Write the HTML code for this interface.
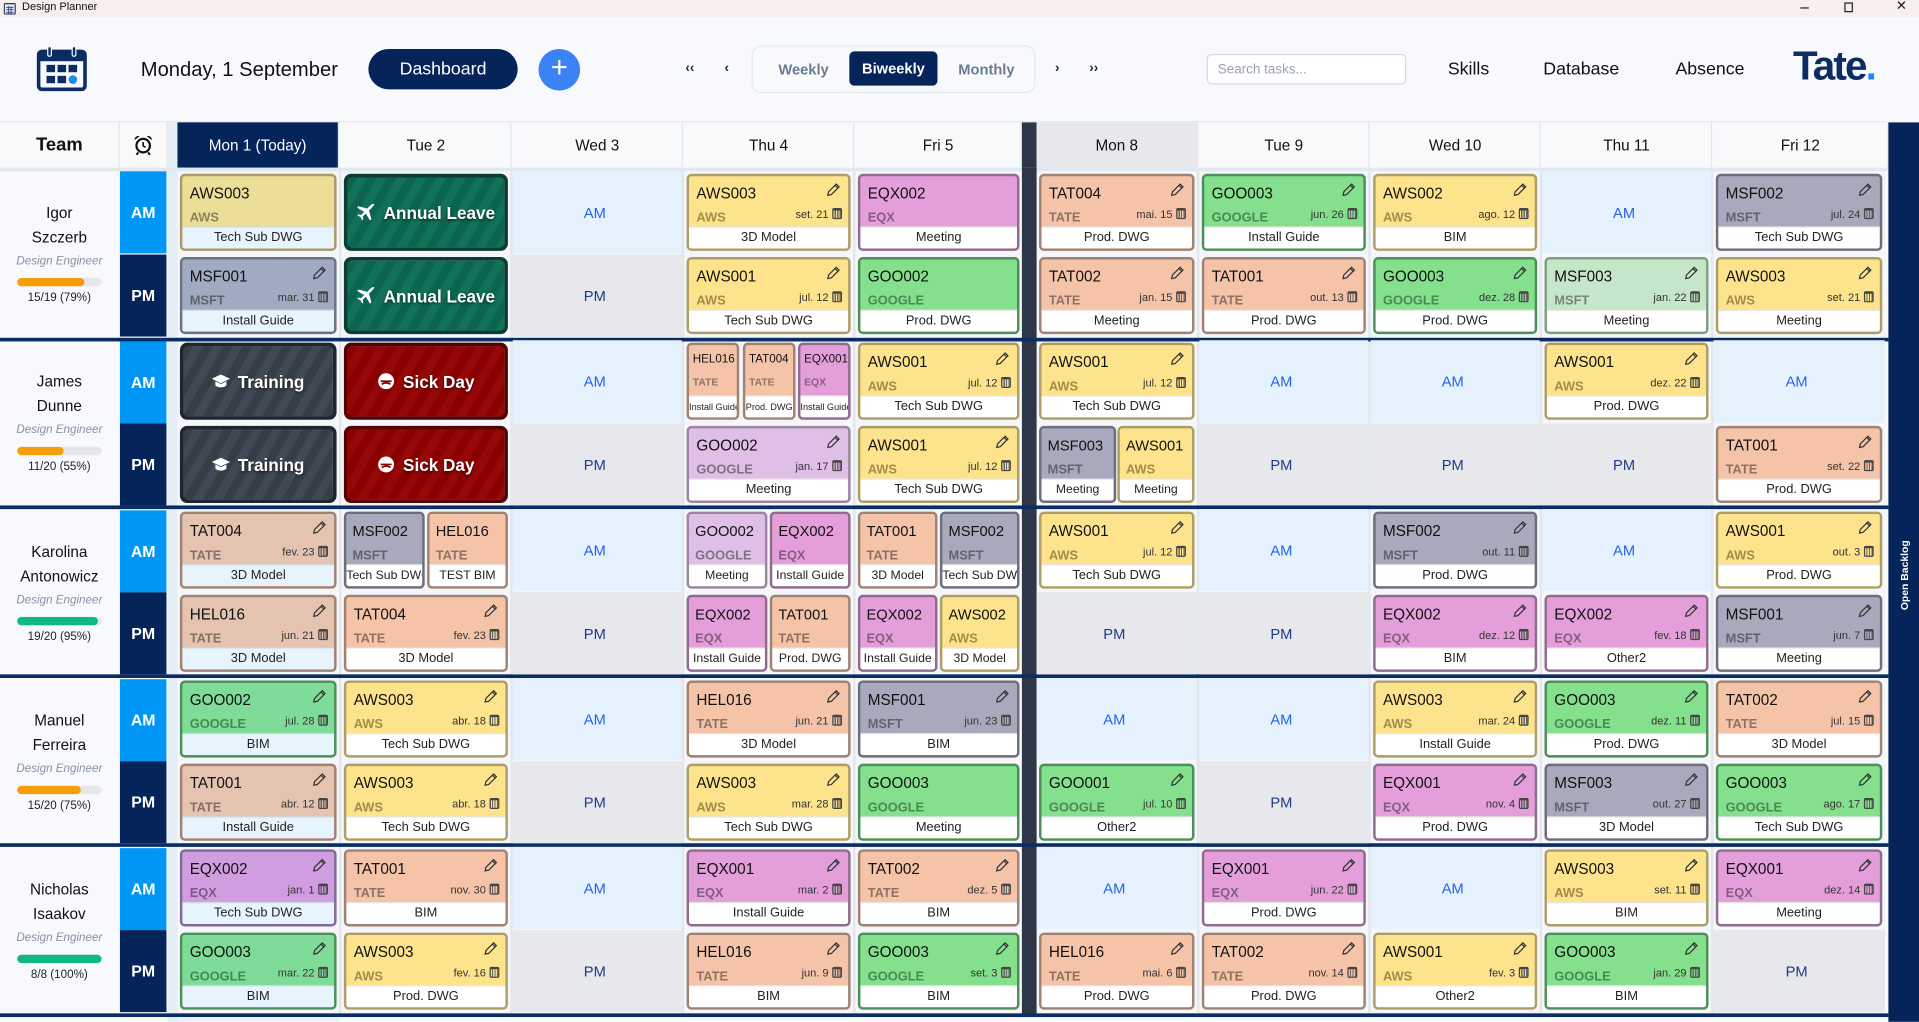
<!DOCTYPE html>
<html><head><meta charset="utf-8">
<style>
html,body{margin:0;padding:0;width:1919px;height:1022px;overflow:hidden;background:#f7f9fc}
#w{position:absolute;left:0;top:0;width:1568px;height:835px;transform:scale(1.22385);transform-origin:0 0;background:#f7f9fc;overflow:hidden;font-family:"Liberation Sans",sans-serif;color:#1f2937}
.ab{position:absolute}
.tb{left:0;top:0;width:1568px;height:14px;background:#f8eeec}
.hc{position:absolute;top:100px;height:37px;background:#f8f9fb;border-right:1px solid #e3e7ec;box-sizing:border-box;font-size:12.5px;display:flex;align-items:center;justify-content:center;color:#111}
.col{position:absolute;top:140px;height:691px;background:#f4f6f9}
.k{position:absolute;height:63px;border:2px solid #a89a6a;border-radius:4px;box-sizing:border-box;overflow:hidden}
.k b{position:absolute;left:6px;top:7px;font-size:12.5px;font-weight:normal;color:#111;white-space:nowrap}
.k s{position:absolute;left:6px;top:28px;font-size:10.5px;font-weight:bold;color:rgba(0,0,0,.42);text-decoration:none;white-space:nowrap}
.k u{position:absolute;right:5px;top:26px;font-size:9px;text-decoration:none;color:#333;white-space:nowrap}
.k p{position:absolute;left:0;right:0;bottom:0;height:17px;margin:0;background:#fff;font-size:10.5px;text-align:center;line-height:17px;color:#222;border-top:1px solid rgba(0,0,0,.1);white-space:nowrap;overflow:hidden}
.k .pn{position:absolute;right:6px;top:5px;width:12px;height:12px}
.cl{display:inline-block;width:6px;height:6px;border:1.3px solid #444;border-top-width:2.5px;border-radius:1.5px;vertical-align:-1px;margin-left:3px;background:repeating-linear-gradient(90deg,transparent 0 1px,#666 1px 2px)}
.m b{font-size:9.5px;left:3px;top:6px}.m s{font-size:8.5px;left:3px;top:25px}.m p{font-size:7.5px}
.h b{font-size:12px;left:5px}.h s{left:5px}.h p{font-size:10px}
.Y{background:#fde38c;border-color:#ad9d69}.Y s{color:rgba(90,70,20,.55)}
.T{background:#f5c4a8;border-color:#9e8374}
.E{background:#e49fdb;border-color:#8f6b8d}
.G{background:#84e08c;border-color:#4e8e5a}.G s{color:rgba(20,70,30,.55)}
.M{background:#a9a9bd;border-color:#6d6d7d}
.L{background:#dfbfe6;border-color:#9a86a0}
.MG{background:#c6e6c9;border-color:#7f9f83}
.Y1{background:#ebdf98;border-color:#a89a6a}
.M1{background:#a0aac0;border-color:#6d7283}
.T1{background:#e4c3b0;border-color:#9e8374}
.G1{background:#7edb98;border-color:#4e8e5a}.G1 s{color:rgba(20,70,30,.55)}
.E1{background:#d09ee0;border-color:#7f6a95}
.x1 p{background:#e8f4fd}
.e{position:absolute;height:67px;margin:-2px 0 0 -2px;padding-right:4px;display:flex;align-items:center;justify-content:center;font-size:12px}
.ea{background:#e5f1fd;color:#2563eb}.ep{background:#e6e8ec;color:#1e3a8a}
.lv{position:absolute;height:63px;border:3px solid;border-radius:6px;box-sizing:border-box;color:#fff;font-weight:bold;font-size:14px;display:flex;align-items:center;justify-content:center;text-shadow:0 1px 2px rgba(0,0,0,.6)}
.lv svg{margin-right:6px}
.al{background:repeating-linear-gradient(120deg,#0c6450 0 7px,#117259 7px 14px);border-color:#0b3d31}
.tr{background:repeating-linear-gradient(120deg,#353d46 0 7px,#414a54 7px 14px);border-color:#1e2630}
.sd{background:repeating-linear-gradient(120deg,#8a0000 0 7px,#960808 7px 14px);border-color:#560000}
.x1{left:147px;width:128px}.x2{left:281px;width:134px}.x3{left:421px;width:134px}.x4{left:561px;width:134px}.x5{left:701px;width:132px}
.x6{left:849px;width:127px}.x7{left:982px;width:134px}.x8{left:1122px;width:134px}.x9{left:1262px;width:134px}.x10{left:1402px;width:136px}
.a0{top:142px}.p0{top:210px}.a1{top:280px}.p1{top:348px}.a2{top:418px}.p2{top:486px}.a3{top:556px}.p3{top:624px}.a4{top:694px}.p4{top:762px}
.lab{position:absolute;left:98px;width:38px;height:67px;color:#fff;font-weight:bold;font-size:13px;display:flex;align-items:center;justify-content:center}
.la{background:#0096f5}.lp{background:#04245a}
.sep{position:absolute;left:0;width:1543px;height:3px;background:#0b2d63}
.per{position:absolute;left:0;width:97px;height:135px;text-align:center;background:#f7f9fc}
.per .n{position:absolute;left:0;right:0;font-size:12.5px;color:#111}
.per .r{position:absolute;left:0;right:0;font-size:9.5px;font-style:italic;color:#8591a5}
.per .bar{position:absolute;left:14px;width:69px;height:7px;border-radius:4px;background:#e5e7eb;overflow:hidden}
.per .bar i{display:block;height:100%;border-radius:4px}
.per .q{position:absolute;left:0;right:0;font-size:9.5px;color:#222}
.nav{position:absolute;font-size:14px;color:#1f2937}
</style></head><body>
<svg width="0" height="0" style="position:absolute"><defs><symbol id="pen" viewBox="0 0 12 12"><path d="M8.3 1.4l2.3 2.3-6.3 6.3-2.9.6.6-2.9z M7.3 2.4l2.3 2.3" fill="none" stroke="#333" stroke-width="1"/></symbol></defs></svg>
<div id="w">
<div class="ab tb"></div>
<svg class="ab" style="left:3px;top:2px" width="10" height="10" viewBox="0 0 10 10"><rect x="0.5" y="1" width="9" height="8.5" rx="1" fill="#dfe6f5" stroke="#2b3a67"/><path d="M2 4h6M2 6h6M2 8h6M4 3v6M6 3v6" stroke="#2b3a67" stroke-width=".6"/></svg>
<div class="ab" style="left:18px;top:0;font-size:9px;line-height:11px;color:#111">Design Planner</div>
<div class="ab" style="left:1471px;top:6px;width:7px;height:1px;background:#222"></div>
<div class="ab" style="left:1507px;top:2px;width:5px;height:6px;border:1px solid #222"></div>
<div class="ab" style="left:1549px;top:-2px;font-size:11px;color:#222">✕</div>

<svg class="ab" style="left:30px;top:37px" width="41" height="38" viewBox="0 0 41 38"><rect x="1.5" y="5" width="38" height="31" rx="3" fill="none" stroke="#0b2d63" stroke-width="3"/><rect x="1.5" y="5" width="38" height="8" fill="#0b2d63"/><rect x="9" y="1" width="3" height="8" rx="1.5" fill="#0b2d63" stroke="#f7f9fc" stroke-width="1"/><rect x="29" y="1" width="3" height="8" rx="1.5" fill="#0b2d63" stroke="#f7f9fc" stroke-width="1"/><rect x="8" y="16" width="7" height="6" fill="#0b2d63"/><rect x="17" y="16" width="7" height="6" fill="#0b2d63"/><rect x="26" y="16" width="7" height="6" fill="#0b2d63"/><rect x="8" y="25" width="7" height="6" fill="#0b2d63"/><rect x="17" y="25" width="7" height="6" fill="#0b2d63"/><circle cx="29.5" cy="28" r="3.5" fill="#1e88f0"/></svg>
<div class="ab" style="left:115px;top:48px;font-size:16.5px;color:#111">Monday, 1 September</div>
<div class="ab" style="left:301px;top:40px;width:122px;height:33px;border-radius:17px;background:#04245a;color:#fff;font-size:14.5px;display:flex;align-items:center;justify-content:center">Dashboard</div>
<div class="ab" style="left:440px;top:40px;width:34px;height:34px;border-radius:50%;background:#3b82f6;color:#fff;font-size:24px;line-height:32px;text-align:center">+</div>
<div class="nav" style="left:560px;top:50px;font-size:11px;font-weight:bold">‹‹</div>
<div class="nav" style="left:592px;top:50px;font-size:11px;font-weight:bold">‹</div>
<div class="ab" style="left:614px;top:37px;width:232px;height:39px;border:1px solid #e5e9f0;border-radius:8px;box-sizing:border-box;background:#f7f9fc"></div>
<div class="ab" style="left:636px;top:50px;font-size:12px;font-weight:bold;color:#6b7a90">Weekly</div>
<div class="ab" style="left:694px;top:42px;width:72px;height:28px;border-radius:4px;background:#04245a;color:#fff;font-size:12px;font-weight:bold;display:flex;align-items:center;justify-content:center">Biweekly</div>
<div class="ab" style="left:783px;top:50px;font-size:12px;font-weight:bold;color:#6b7a90">Monthly</div>
<div class="nav" style="left:862px;top:50px;font-size:11px;font-weight:bold">›</div>
<div class="nav" style="left:890px;top:50px;font-size:11px;font-weight:bold">››</div>
<div class="ab" style="left:986px;top:44px;width:163px;height:25px;border:1px solid #d6dbe3;border-radius:4px;box-sizing:border-box;background:#fff;font-size:11px;color:#9aa3af;padding:6px 8px">Search tasks...</div>
<div class="ab" style="left:1183px;top:49px;font-size:14.5px;color:#111">Skills</div>
<div class="ab" style="left:1261px;top:49px;font-size:14.5px;color:#111">Database</div>
<div class="ab" style="left:1369px;top:49px;font-size:14.5px;color:#111">Absence</div>
<div class="ab" style="left:1465px;top:35px;font-size:33px;font-weight:bold;color:#0b2d63;letter-spacing:-1.5px">Tate<span style="color:#1e88f0">.</span></div>

<div class="ab" style="left:0;top:99px;width:1543px;height:1px;background:#e3e7ec"></div>
<div class="hc" style="left:0;width:98px;font-size:15px;font-weight:bold">Team</div>
<div class="hc" style="left:98px;width:39px"><svg width="16" height="17" viewBox="0 0 16 17"><circle cx="8" cy="9" r="5.5" fill="#fff" stroke="#111" stroke-width="1.8"/><path d="M8 6v3.2l2 1.2" stroke="#111" stroke-width="1.3" fill="none"/><path d="M1 4.5a3 3 0 0 1 4-3.2zM15 4.5a3 3 0 0 0-4-3.2z" fill="#111"/><path d="M4 14.5l-1.5 2M12 14.5l1.5 2" stroke="#111" stroke-width="1.6"/></svg></div>
<div class="ab" style="left:137px;top:100px;width:8px;height:735px;background:#e5edf5"></div>
<div class="hc" style="left:145px;width:132px;background:#04245a;color:#fff">Mon 1 (Today)</div>
<div class="hc" style="left:279px;width:139px">Tue 2</div>
<div class="hc" style="left:419px;width:139px">Wed 3</div>
<div class="hc" style="left:559px;width:139px">Thu 4</div>
<div class="hc" style="left:699px;width:136px">Fri 5</div>
<div class="ab" style="left:835px;top:100px;width:12px;height:731px;background:#2d3748"></div>
<div class="hc" style="left:847px;width:132px;background:#e6e8ec">Mon 8</div>
<div class="hc" style="left:980px;width:139px">Tue 9</div>
<div class="hc" style="left:1120px;width:139px">Wed 10</div>
<div class="hc" style="left:1260px;width:139px">Thu 11</div>
<div class="hc" style="left:1400px;width:143px">Fri 12</div>
<div class="ab" style="left:0;top:137px;width:1543px;height:3px;background:#e2e8f0"></div>

<div class="ab" style="left:1543px;top:100px;width:25px;height:735px;background:#04245a"></div>
<div class="ab" style="left:1516px;top:464px;width:80px;height:12px;transform:rotate(-90deg);color:#fff;font-size:8.5px;font-weight:bold;text-align:center;line-height:12px">Open Backlog</div>

<div class="ab" style="left:145px;top:140px;width:1395px;height:691px;background:#e3e7ec"></div>
<div class="col" style="left:145px;width:132px"></div><div class="col" style="left:279px;width:138px"></div><div class="col" style="left:419px;width:138px"></div><div class="col" style="left:559px;width:138px"></div><div class="col" style="left:699px;width:136px"></div>
<div class="col" style="left:847px;width:131px"></div><div class="col" style="left:980px;width:138px"></div><div class="col" style="left:1120px;width:138px"></div><div class="col" style="left:1260px;width:138px"></div><div class="col" style="left:1400px;width:140px"></div>
<div class="ab" style="left:835px;top:137px;width:12px;height:694px;background:#2d3748"></div>

<div class="per" style="top:140px"><div class="n" style="top:27px">Igor</div><div class="n" style="top:47px">Szczerb</div><div class="r" style="top:68px">Design Engineer</div><div class="bar" style="top:87px"><i style="width:79%;background:#f59e0b"></i></div><div class="q" style="top:98px">15/19 (79%)</div></div>
<div class="per" style="top:279px"><div class="n" style="top:26px">James</div><div class="n" style="top:46px">Dunne</div><div class="r" style="top:67px">Design Engineer</div><div class="bar" style="top:86px"><i style="width:55%;background:#f59e0b"></i></div><div class="q" style="top:97px">11/20 (55%)</div></div>
<div class="per" style="top:418px"><div class="n" style="top:26px">Karolina</div><div class="n" style="top:46px">Antonowicz</div><div class="r" style="top:67px">Design Engineer</div><div class="bar" style="top:86px"><i style="width:95%;background:#10b981"></i></div><div class="q" style="top:97px">19/20 (95%)</div></div>
<div class="per" style="top:556px"><div class="n" style="top:26px">Manuel</div><div class="n" style="top:46px">Ferreira</div><div class="r" style="top:67px">Design Engineer</div><div class="bar" style="top:86px"><i style="width:75%;background:#f59e0b"></i></div><div class="q" style="top:97px">15/20 (75%)</div></div>
<div class="per" style="top:694px"><div class="n" style="top:26px">Nicholas</div><div class="n" style="top:46px">Isaakov</div><div class="r" style="top:67px">Design Engineer</div><div class="bar" style="top:86px"><i style="width:100%;background:#10b981"></i></div><div class="q" style="top:97px">8/8 (100%)</div></div>

<div class="lab la" style="top:140px">AM</div><div class="lab lp" style="top:208px">PM</div>
<div class="lab la" style="top:279px">AM</div><div class="lab lp" style="top:346px">PM</div>
<div class="lab la" style="top:417px">AM</div><div class="lab lp" style="top:484px">PM</div>
<div class="lab la" style="top:555px">AM</div><div class="lab lp" style="top:622px">PM</div>
<div class="lab la" style="top:693px">AM</div><div class="lab lp" style="top:760px">PM</div>

<div class="sep" style="top:276px"></div><div class="sep" style="top:413px"></div><div class="sep" style="top:551px"></div><div class="sep" style="top:689px"></div><div class="sep" style="top:828px"></div>

<div class="k Y1 x1 a0"><b>AWS003</b><s>AWS</s><p>Tech Sub DWG</p></div>
<div class="lv al x2 a0"><svg width="16" height="16" viewBox="0 0 16 16"><path d="M15 1c-1-1-2.5 0-3.5 1L9 4.5 2 2.5 0.8 3.7l5.8 3.4L4 9.7 1.8 9.2 1 10l2.6 1.4L5 14l.8-.8-.5-2.2 2.6-2.6 3.4 5.8 1.2-1.2-2-7L13 3.5c1-1 2-2.5 2-2.5z" fill="#fff"/></svg>Annual Leave</div>
<div class="e ea x3 a0">AM</div>
<div class="k Y x4 a0"><b>AWS003</b><svg class="pn"><use href="#pen"/></svg><s>AWS</s><u>set. 21<i class="cl"></i></u><p>3D Model</p></div>
<div class="k E x5 a0"><b>EQX002</b><s>EQX</s><p>Meeting</p></div>
<div class="k T x6 a0"><b>TAT004</b><svg class="pn"><use href="#pen"/></svg><s>TATE</s><u>mai. 15<i class="cl"></i></u><p>Prod. DWG</p></div>
<div class="k G x7 a0"><b>GOO003</b><svg class="pn"><use href="#pen"/></svg><s>GOOGLE</s><u>jun. 26<i class="cl"></i></u><p>Install Guide</p></div>
<div class="k Y x8 a0"><b>AWS002</b><svg class="pn"><use href="#pen"/></svg><s>AWS</s><u>ago. 12<i class="cl"></i></u><p>BIM</p></div>
<div class="e ea x9 a0">AM</div>
<div class="k M x10 a0"><b>MSF002</b><svg class="pn"><use href="#pen"/></svg><s>MSFT</s><u>jul. 24<i class="cl"></i></u><p>Tech Sub DWG</p></div>

<div class="k M1 x1 p0"><b>MSF001</b><svg class="pn"><use href="#pen"/></svg><s>MSFT</s><u>mar. 31<i class="cl"></i></u><p>Install Guide</p></div>
<div class="lv al x2 p0"><svg width="16" height="16" viewBox="0 0 16 16"><path d="M15 1c-1-1-2.5 0-3.5 1L9 4.5 2 2.5 0.8 3.7l5.8 3.4L4 9.7 1.8 9.2 1 10l2.6 1.4L5 14l.8-.8-.5-2.2 2.6-2.6 3.4 5.8 1.2-1.2-2-7L13 3.5c1-1 2-2.5 2-2.5z" fill="#fff"/></svg>Annual Leave</div>
<div class="e ep x3 p0">PM</div>
<div class="k Y x4 p0"><b>AWS001</b><svg class="pn"><use href="#pen"/></svg><s>AWS</s><u>jul. 12<i class="cl"></i></u><p>Tech Sub DWG</p></div>
<div class="k G x5 p0"><b>GOO002</b><s>GOOGLE</s><p>Prod. DWG</p></div>
<div class="k T x6 p0"><b>TAT002</b><svg class="pn"><use href="#pen"/></svg><s>TATE</s><u>jan. 15<i class="cl"></i></u><p>Meeting</p></div>
<div class="k T x7 p0"><b>TAT001</b><svg class="pn"><use href="#pen"/></svg><s>TATE</s><u>out. 13<i class="cl"></i></u><p>Prod. DWG</p></div>
<div class="k G x8 p0"><b>GOO003</b><svg class="pn"><use href="#pen"/></svg><s>GOOGLE</s><u>dez. 28<i class="cl"></i></u><p>Prod. DWG</p></div>
<div class="k MG x9 p0"><b>MSF003</b><svg class="pn"><use href="#pen"/></svg><s>MSFT</s><u>jan. 22<i class="cl"></i></u><p>Meeting</p></div>
<div class="k Y x10 p0"><b>AWS003</b><svg class="pn"><use href="#pen"/></svg><s>AWS</s><u>set. 21<i class="cl"></i></u><p>Meeting</p></div>

<div class="lv tr x1 a1"><svg width="15" height="13" viewBox="0 0 15 13"><path d="M7.5 1L0 4.5l7.5 3.5L15 4.5z M3 6.5v3.5c2 2 7 2 9 0V6.5L7.5 8.8z" fill="#fff"/></svg>Training</div>
<div class="lv sd x2 a1"><svg width="15" height="15" viewBox="0 0 15 15"><circle cx="7.5" cy="7.5" r="6.5" fill="#fff"/><path d="M3 7.5h9M4 10c2-1.5 5-1.5 7 0" stroke="#8a0000" stroke-width="1.4" fill="none"/></svg>Sick Day</div>
<div class="e ea x3 a1">AM</div>
<div class="k T m" style="left:561px;width:43px;top:280px"><b>HEL016</b><s>TATE</s><p>Install Guide</p></div>
<div class="k T m" style="left:607px;width:43px;top:280px"><b>TAT004</b><s>TATE</s><p>Prod. DWG</p></div>
<div class="k E m" style="left:652px;width:43px;top:280px"><b>EQX001</b><s>EQX</s><p>Install Guide</p></div>
<div class="k Y x5 a1"><b>AWS001</b><svg class="pn"><use href="#pen"/></svg><s>AWS</s><u>jul. 12<i class="cl"></i></u><p>Tech Sub DWG</p></div>
<div class="k Y x6 a1"><b>AWS001</b><svg class="pn"><use href="#pen"/></svg><s>AWS</s><u>jul. 12<i class="cl"></i></u><p>Tech Sub DWG</p></div>
<div class="e ea x7 a1">AM</div>
<div class="e ea x8 a1">AM</div>
<div class="k Y x9 a1"><b>AWS001</b><svg class="pn"><use href="#pen"/></svg><s>AWS</s><u>dez. 22<i class="cl"></i></u><p>Prod. DWG</p></div>
<div class="e ea x10 a1">AM</div>

<div class="lv tr x1 p1"><svg width="15" height="13" viewBox="0 0 15 13"><path d="M7.5 1L0 4.5l7.5 3.5L15 4.5z M3 6.5v3.5c2 2 7 2 9 0V6.5L7.5 8.8z" fill="#fff"/></svg>Training</div>
<div class="lv sd x2 p1"><svg width="15" height="15" viewBox="0 0 15 15"><circle cx="7.5" cy="7.5" r="6.5" fill="#fff"/><path d="M3 7.5h9M4 10c2-1.5 5-1.5 7 0" stroke="#8a0000" stroke-width="1.4" fill="none"/></svg>Sick Day</div>
<div class="e ep x3 p1">PM</div>
<div class="k L x4 p1"><b>GOO002</b><svg class="pn"><use href="#pen"/></svg><s>GOOGLE</s><u>jan. 17<i class="cl"></i></u><p>Meeting</p></div>
<div class="k Y x5 p1"><b>AWS001</b><svg class="pn"><use href="#pen"/></svg><s>AWS</s><u>jul. 12<i class="cl"></i></u><p>Tech Sub DWG</p></div>
<div class="k M h" style="left:849px;width:63px;top:348px"><b>MSF003</b><s>MSFT</s><p>Meeting</p></div>
<div class="k Y h" style="left:913px;width:63px;top:348px"><b>AWS001</b><s>AWS</s><p>Meeting</p></div>
<div class="e ep x7 p1">PM</div>
<div class="e ep x8 p1">PM</div>
<div class="e ep x9 p1">PM</div>
<div class="k T x10 p1"><b>TAT001</b><svg class="pn"><use href="#pen"/></svg><s>TATE</s><u>set. 22<i class="cl"></i></u><p>Prod. DWG</p></div>

<div class="k T1 x1 a2"><b>TAT004</b><svg class="pn"><use href="#pen"/></svg><s>TATE</s><u>fev. 23<i class="cl"></i></u><p>3D Model</p></div>
<div class="k M h" style="left:281px;width:66px;top:418px"><b>MSF002</b><s>MSFT</s><p>Tech Sub DWG</p></div>
<div class="k T h" style="left:349px;width:66px;top:418px"><b>HEL016</b><s>TATE</s><p>TEST BIM</p></div>
<div class="e ea x3 a2">AM</div>
<div class="k L h" style="left:561px;width:66px;top:418px"><b>GOO002</b><s>GOOGLE</s><p>Meeting</p></div>
<div class="k E h" style="left:629px;width:66px;top:418px"><b>EQX002</b><s>EQX</s><p>Install Guide</p></div>
<div class="k T h" style="left:701px;width:65px;top:418px"><b>TAT001</b><s>TATE</s><p>3D Model</p></div>
<div class="k M h" style="left:768px;width:65px;top:418px"><b>MSF002</b><s>MSFT</s><p>Tech Sub DWG</p></div>
<div class="k Y x6 a2"><b>AWS001</b><svg class="pn"><use href="#pen"/></svg><s>AWS</s><u>jul. 12<i class="cl"></i></u><p>Tech Sub DWG</p></div>
<div class="e ea x7 a2">AM</div>
<div class="k M x8 a2"><b>MSF002</b><svg class="pn"><use href="#pen"/></svg><s>MSFT</s><u>out. 11<i class="cl"></i></u><p>Prod. DWG</p></div>
<div class="e ea x9 a2">AM</div>
<div class="k Y x10 a2"><b>AWS001</b><svg class="pn"><use href="#pen"/></svg><s>AWS</s><u>out. 3<i class="cl"></i></u><p>Prod. DWG</p></div>

<div class="k T1 x1 p2"><b>HEL016</b><svg class="pn"><use href="#pen"/></svg><s>TATE</s><u>jun. 21<i class="cl"></i></u><p>3D Model</p></div>
<div class="k T x2 p2"><b>TAT004</b><svg class="pn"><use href="#pen"/></svg><s>TATE</s><u>fev. 23<i class="cl"></i></u><p>3D Model</p></div>
<div class="e ep x3 p2">PM</div>
<div class="k E h" style="left:561px;width:66px;top:486px"><b>EQX002</b><s>EQX</s><p>Install Guide</p></div>
<div class="k T h" style="left:629px;width:66px;top:486px"><b>TAT001</b><s>TATE</s><p>Prod. DWG</p></div>
<div class="k E h" style="left:701px;width:65px;top:486px"><b>EQX002</b><s>EQX</s><p>Install Guide</p></div>
<div class="k Y h" style="left:768px;width:65px;top:486px"><b>AWS002</b><s>AWS</s><p>3D Model</p></div>
<div class="e ep x6 p2">PM</div>
<div class="e ep x7 p2">PM</div>
<div class="k E x8 p2"><b>EQX002</b><svg class="pn"><use href="#pen"/></svg><s>EQX</s><u>dez. 12<i class="cl"></i></u><p>BIM</p></div>
<div class="k E x9 p2"><b>EQX002</b><svg class="pn"><use href="#pen"/></svg><s>EQX</s><u>fev. 18<i class="cl"></i></u><p>Other2</p></div>
<div class="k M x10 p2"><b>MSF001</b><svg class="pn"><use href="#pen"/></svg><s>MSFT</s><u>jun. 7<i class="cl"></i></u><p>Meeting</p></div>

<div class="k G1 x1 a3"><b>GOO002</b><svg class="pn"><use href="#pen"/></svg><s>GOOGLE</s><u>jul. 28<i class="cl"></i></u><p>BIM</p></div>
<div class="k Y x2 a3"><b>AWS003</b><svg class="pn"><use href="#pen"/></svg><s>AWS</s><u>abr. 18<i class="cl"></i></u><p>Tech Sub DWG</p></div>
<div class="e ea x3 a3">AM</div>
<div class="k T x4 a3"><b>HEL016</b><svg class="pn"><use href="#pen"/></svg><s>TATE</s><u>jun. 21<i class="cl"></i></u><p>3D Model</p></div>
<div class="k M x5 a3"><b>MSF001</b><svg class="pn"><use href="#pen"/></svg><s>MSFT</s><u>jun. 23<i class="cl"></i></u><p>BIM</p></div>
<div class="e ea x6 a3">AM</div>
<div class="e ea x7 a3">AM</div>
<div class="k Y x8 a3"><b>AWS003</b><svg class="pn"><use href="#pen"/></svg><s>AWS</s><u>mar. 24<i class="cl"></i></u><p>Install Guide</p></div>
<div class="k G x9 a3"><b>GOO003</b><svg class="pn"><use href="#pen"/></svg><s>GOOGLE</s><u>dez. 11<i class="cl"></i></u><p>Prod. DWG</p></div>
<div class="k T x10 a3"><b>TAT002</b><svg class="pn"><use href="#pen"/></svg><s>TATE</s><u>jul. 15<i class="cl"></i></u><p>3D Model</p></div>

<div class="k T1 x1 p3"><b>TAT001</b><svg class="pn"><use href="#pen"/></svg><s>TATE</s><u>abr. 12<i class="cl"></i></u><p>Install Guide</p></div>
<div class="k Y x2 p3"><b>AWS003</b><svg class="pn"><use href="#pen"/></svg><s>AWS</s><u>abr. 18<i class="cl"></i></u><p>Tech Sub DWG</p></div>
<div class="e ep x3 p3">PM</div>
<div class="k Y x4 p3"><b>AWS003</b><svg class="pn"><use href="#pen"/></svg><s>AWS</s><u>mar. 28<i class="cl"></i></u><p>Tech Sub DWG</p></div>
<div class="k G x5 p3"><b>GOO003</b><s>GOOGLE</s><p>Meeting</p></div>
<div class="k G x6 p3"><b>GOO001</b><svg class="pn"><use href="#pen"/></svg><s>GOOGLE</s><u>jul. 10<i class="cl"></i></u><p>Other2</p></div>
<div class="e ep x7 p3">PM</div>
<div class="k E x8 p3"><b>EQX001</b><svg class="pn"><use href="#pen"/></svg><s>EQX</s><u>nov. 4<i class="cl"></i></u><p>Prod. DWG</p></div>
<div class="k M x9 p3"><b>MSF003</b><svg class="pn"><use href="#pen"/></svg><s>MSFT</s><u>out. 27<i class="cl"></i></u><p>3D Model</p></div>
<div class="k G x10 p3"><b>GOO003</b><svg class="pn"><use href="#pen"/></svg><s>GOOGLE</s><u>ago. 17<i class="cl"></i></u><p>Tech Sub DWG</p></div>

<div class="k E1 x1 a4"><b>EQX002</b><svg class="pn"><use href="#pen"/></svg><s>EQX</s><u>jan. 1<i class="cl"></i></u><p>Tech Sub DWG</p></div>
<div class="k T x2 a4"><b>TAT001</b><svg class="pn"><use href="#pen"/></svg><s>TATE</s><u>nov. 30<i class="cl"></i></u><p>BIM</p></div>
<div class="e ea x3 a4">AM</div>
<div class="k E x4 a4"><b>EQX001</b><svg class="pn"><use href="#pen"/></svg><s>EQX</s><u>mar. 2<i class="cl"></i></u><p>Install Guide</p></div>
<div class="k T x5 a4"><b>TAT002</b><svg class="pn"><use href="#pen"/></svg><s>TATE</s><u>dez. 5<i class="cl"></i></u><p>BIM</p></div>
<div class="e ea x6 a4">AM</div>
<div class="k E x7 a4"><b>EQX001</b><svg class="pn"><use href="#pen"/></svg><s>EQX</s><u>jun. 22<i class="cl"></i></u><p>Prod. DWG</p></div>
<div class="e ea x8 a4">AM</div>
<div class="k Y x9 a4"><b>AWS003</b><svg class="pn"><use href="#pen"/></svg><s>AWS</s><u>set. 11<i class="cl"></i></u><p>BIM</p></div>
<div class="k E x10 a4"><b>EQX001</b><svg class="pn"><use href="#pen"/></svg><s>EQX</s><u>dez. 14<i class="cl"></i></u><p>Meeting</p></div>

<div class="k G1 x1 p4"><b>GOO003</b><svg class="pn"><use href="#pen"/></svg><s>GOOGLE</s><u>mar. 22<i class="cl"></i></u><p>BIM</p></div>
<div class="k Y x2 p4"><b>AWS003</b><svg class="pn"><use href="#pen"/></svg><s>AWS</s><u>fev. 16<i class="cl"></i></u><p>Prod. DWG</p></div>
<div class="e ep x3 p4">PM</div>
<div class="k T x4 p4"><b>HEL016</b><svg class="pn"><use href="#pen"/></svg><s>TATE</s><u>jun. 9<i class="cl"></i></u><p>BIM</p></div>
<div class="k G x5 p4"><b>GOO003</b><svg class="pn"><use href="#pen"/></svg><s>GOOGLE</s><u>set. 3<i class="cl"></i></u><p>BIM</p></div>
<div class="k T x6 p4"><b>HEL016</b><svg class="pn"><use href="#pen"/></svg><s>TATE</s><u>mai. 6<i class="cl"></i></u><p>Prod. DWG</p></div>
<div class="k T x7 p4"><b>TAT002</b><svg class="pn"><use href="#pen"/></svg><s>TATE</s><u>nov. 14<i class="cl"></i></u><p>Prod. DWG</p></div>
<div class="k Y x8 p4"><b>AWS001</b><svg class="pn"><use href="#pen"/></svg><s>AWS</s><u>fev. 3<i class="cl"></i></u><p>Other2</p></div>
<div class="k G x9 p4"><b>GOO003</b><svg class="pn"><use href="#pen"/></svg><s>GOOGLE</s><u>jan. 29<i class="cl"></i></u><p>BIM</p></div>
<div class="e ep x10 p4">PM</div>

<div class="ab" style="left:145px;top:831px;width:132px;height:4px;background:#e8f4fd"></div>
</div>
</body></html>
